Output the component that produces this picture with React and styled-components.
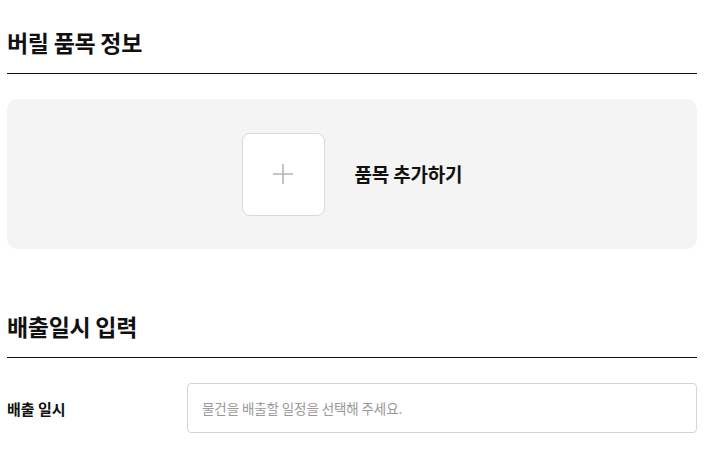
import React from "react";
import styled, { createGlobalStyle } from "styled-components";

const Global = createGlobalStyle`
  html, body { margin: 0; padding: 0; background: #fff; }
  body { font-family: "Noto Sans CJK KR", "Noto Sans", sans-serif; color: #111; }
  * { box-sizing: border-box; }
`;

const Page = styled.div`
  width: 690px;
  margin-left: 7px;
  padding-top: 27px;
  display: flex;
  flex-direction: column;
`;

const Section = styled.section`
  display: flex;
  flex-direction: column;
  gap: 25px;
  margin-top: ${(p) => p.$top || 0}px;
`;

const Heading = styled.h2`
  margin: 0;
  font-size: 23px;
  line-height: 31px;
  font-weight: 700;
  letter-spacing: -0.3px;
  color: #111;
  padding-bottom: 15px;
  border-bottom: 1px solid #111;
`;

const AddPanel = styled.div`
  height: 150px;
  background: #f4f4f4;
  border-radius: 10px;
  display: flex;
  align-items: center;
  justify-content: center;
  gap: 30px;
`;

const AddTile = styled.button`
  width: 83px;
  height: 83px;
  background: #fff;
  border: 1px solid #d9d9d9;
  border-radius: 8px;
  display: flex;
  align-items: center;
  justify-content: center;
  padding: 0;
  cursor: pointer;
`;

const AddLabel = styled.span`
  font-size: 19px;
  font-weight: 700;
  letter-spacing: -0.2px;
  color: #111;
  margin-top: -1px;
`;

const Row = styled.div`
  display: flex;
  align-items: center;
`;

const Label = styled.label`
  width: 180px;
  font-size: 15px;
  font-weight: 700;
  color: #111;
`;

const Input = styled.input`
  flex: 1;
  height: 50px;
  border: 1px solid #d4d4d4;
  border-radius: 4px;
  padding: 0 14px;
  font-family: "Noto Sans CJK KR", "Noto Sans", sans-serif;
  font-size: 13.5px;
  letter-spacing: -0.1px;
  color: #111;
  outline: none;
  &::placeholder { color: #999; }
`;

export default function App() {
  return (
    <>
      <Global />
      <Page>
        <Section>
          <Heading>버릴 품목 정보</Heading>
          <AddPanel>
            <AddTile aria-label="품목 추가">
              <svg width="24" height="24" viewBox="0 0 24 24">
                <path d="M12 2v20M2 12h20" stroke="#b5b5b5" strokeWidth="1.6" fill="none" />
              </svg>
            </AddTile>
            <AddLabel>품목 추가하기</AddLabel>
          </AddPanel>
        </Section>
        <Section $top={62}>
          <Heading>배출일시 입력</Heading>
          <Row>
            <Label>배출 일시</Label>
            <Input placeholder="물건을 배출할 일정을 선택해 주세요." />
          </Row>
        </Section>
      </Page>
    </>
  );
}
